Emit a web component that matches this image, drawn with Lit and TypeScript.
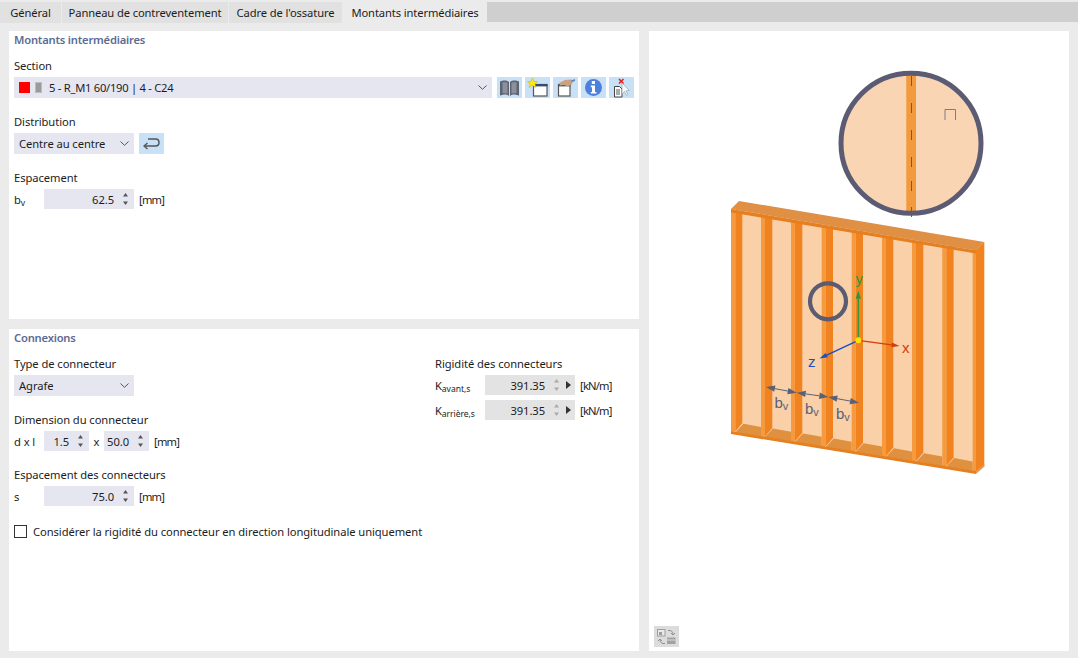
import { LitElement, html, css, svg } from "lit";
import { customElement } from "lit/decorators.js";

const chevron = html`<svg class="chev" width="9" height="5" viewBox="0 0 9 5"><path d="M.5 .5 4.5 4.3 8.5 .5" fill="none" stroke="#555" stroke-width="1"/></svg>`;

const spin = (dis = false) => html`<svg class="spin" width="5" height="12" viewBox="0 0 5 12">
  <path d="M2.5 0 5 3.5H0Z" fill="${dis ? "#aaa" : "#555"}"/><path d="M2.5 12 0 8.5H5Z" fill="${dis ? "#aaa" : "#555"}"/></svg>`;

const yTop = (x: number) => 209 + (x - 731) * 0.167;
const yBot = (x: number) => 431.5 + (x - 731) * 0.163;

function wall() {
  const posts = [731, 761, 791, 821.7, 851.7, 882, 912, 942.3];
  const parts: unknown[] = [];
  parts.push(svg`<polygon points="731,209 976,250 976,471 731,431" fill="#f9d0a8"/>`);
  const starts = [735.5, ...posts.slice(1).map((p) => p + 4)];
  const ends = [761, 791, 821.7, 851.7, 882, 912, 942.3, 972.7];
  starts.forEach((s, i) => {
    const e = ends[i];
    parts.push(svg`<polygon points="${s},${yBot(s)} ${s + 8},${yBot(s) - 8.5} ${e},${yBot(e) - 9.5} ${e},${yBot(e)}" fill="#e0913f"/>`);
  });
  posts.forEach((p) => {
    const light = p === 731 ? 4.3 : 4;
    parts.push(svg`<polygon points="${p},${yTop(p) + 2} ${p + light},${yTop(p) + 2} ${p + light},${yBot(p)} ${p},${yBot(p)}" fill="#f59a3e"/>`);
    parts.push(svg`<polygon points="${p + light},${yTop(p) + 2} ${p + 11.3},${yTop(p) + 2} ${p + 11.3},${yBot(p) - 8.5} ${p + light},${yBot(p)}" fill="#f0831f"/>`);
  });
  parts.push(svg`<polygon points="972.7,249 976,250 976,471 972.7,471" fill="#f59a3e"/>`);
  parts.push(svg`<polygon points="976,250 984.3,242 984.3,466.5 976,473" fill="#f0831f"/>`);
  parts.push(svg`<polygon points="731,209 739,201 984.3,242 976,250.5" fill="#e09045"/>`);
  parts.push(svg`<polygon points="731,209 976,250.5 976,253.5 731,212.5" fill="#e57f20"/>`);
  parts.push(svg`<polygon points="731,431 976,471 976,474 731,434" fill="#e57f20"/>`);
  parts.push(svg`<polygon points="976,471 984.3,464 984.3,466.5 976,474" fill="#e89a55"/>`);
  return parts;
}

const arrow = (x1: number, y1: number, x2: number, y2: number, c: string, w = 1, l = 8, hw = 3) => {
  const a = Math.atan2(y2 - y1, x2 - x1);
  const bx = x2 - Math.cos(a) * l, by = y2 - Math.sin(a) * l;
  const nx = -Math.sin(a) * hw, ny = Math.cos(a) * hw;
  return svg`<line x1="${x1}" y1="${y1}" x2="${bx}" y2="${by}" stroke="${c}" stroke-width="${w}"/>
  <polygon points="${x2},${y2} ${bx + nx},${by + ny} ${bx - nx},${by - ny}" fill="${c}"/>`;
};

const dim = (x1: number, y1: number, x2: number, y2: number) => {
  const c = "#5b6075";
  const mx = (x1 + x2) / 2, my = (y1 + y2) / 2;
  return svg`${arrow(mx, my, x1, y1, c, 1, 9, 3.2)}${arrow(mx, my, x2, y2, c, 1, 9, 3.2)}`;
};

const bv = (x: number, y: number) => svg`<text x="${x}" y="${y}" class="dimt">b<tspan class="dims" dy="2">v</tspan></text>`;

@customElement("app-root")
export class AppRoot extends LitElement {
  static styles = css`
    :host { display: block; width: 1078px; height: 658px; background: #ebebeb; overflow: hidden;
      font-family: "Noto Sans", "Open Sans", sans-serif; font-size: 11.2px; letter-spacing: -0.07px; color: #1c1c1c; }
    .tabs { display: flex; height: 23px; letter-spacing: -0.12px; }
    .tab { height: 21px; margin-top: 2px; background: #e1e1e1; display: flex; align-items: center; justify-content: center; margin-right: 1px; box-sizing: border-box; }
    .tab.active { height: 23px; margin-top: 0; padding-top: 2px; background: #ebebeb; margin-right: 0; }
    .fill { flex: 1; height: 20px; margin-top: 2px; background: #cfcfcf; }
    .body { display: grid; grid-template-columns: 630px 420px; grid-template-rows: 288px 322px; gap: 10px; padding: 8px 9px 0; }
    .panel { background: #fff; padding: 0 5px; min-width: 0; position: relative; }
    .view { grid-row: 1 / 3; grid-column: 2; padding: 0; }
    .title { height: 18px; line-height: 18px; font-weight: 600; color: #5d6b92; letter-spacing: -0.2px; }
    .label { height: 16px; line-height: 16px; margin-bottom: 3px; white-space: nowrap; }
    .group { margin-top: 16px; }
    .first { margin-top: 9px; }
    .row { display: flex; align-items: center; height: 21px; }
    .row.sm { height: 20px; }
    .select { height: 21px; background: #e6e6f0; display: flex; align-items: center; padding: 0 5px; box-sizing: border-box; width: 120px; justify-content: space-between; flex: none; }
    .select.wide { width: 478px; letter-spacing: -0.27px; }
    .left { display: flex; align-items: center; }
    .swatch { width: 11px; height: 11px; background: #f00; }
    .bar { width: 5px; height: 9px; margin: 0 7px 0 5px; background: #9b9b9b; border: 1px solid #bdbdbd; }
    .btns { display: flex; gap: 3px; margin-left: 5px; }
    .btn { width: 25px; height: 21px; background: #c9e1f6; display: flex; align-items: center; justify-content: center; flex: none; }
    .rowlabel { width: 30px; flex: none; white-space: nowrap; }
    .input { height: 20px; background: #e6e6f0; display: flex; align-items: center; justify-content: flex-end; box-sizing: border-box; padding-right: 6px; gap: 9px; flex: none; }
    .input.w90 { width: 90px; }
    .input.w45 { width: 45px; }
    .input.ro { background: #e3e3e3; padding-right: 4px; }
    .unit { margin-left: 5px; white-space: nowrap; letter-spacing: -0.8px; }
    .times { width: 15px; text-align: center; flex: none; }
    sub { font-size: 8.6px; vertical-align: baseline; position: relative; top: 2px; line-height: 0; }
    .cols { display: grid; grid-template-columns: 421px auto; }
    .col2 { margin-top: 9px; }
    .rows2 { display: flex; flex-direction: column; gap: 5px; }
    .rowlabel.k { width: 50px; }
    .tri { margin-left: -2px; }
    .check { display: flex; align-items: center; margin-top: 18px; height: 14px; white-space: nowrap; }
    .box { width: 11px; height: 11px; border: 1px solid #333; background: #fff; margin-right: 6px; flex: none; }
    .scene { position: absolute; left: 0; top: 0; }
    .dimt { font: 15px "Liberation Sans", sans-serif; letter-spacing: 0; fill: #5b6075; }
    .dims { font-size: 11px; }
    .axl { font: 15px "Liberation Sans", sans-serif; letter-spacing: 0; }
    .viewbtn { position: absolute; left: 5px; bottom: 4px; width: 25px; height: 21px; background: #dcdcdc; display: flex; align-items: center; justify-content: center; }
  `;

  private scene() {
    const dashes = [76, 103, 130, 157, 181, 207];
    return html`<svg class="scene" width="420" height="620" viewBox="649 31 420 620">
      <circle cx="911" cy="143.3" r="70" fill="#f9d5b3"/>
      <rect x="906" y="73" width="10" height="140" fill="#f39a3f"/>
      <rect x="906" y="73" width="1" height="140" fill="#f5a860"/>
      ${dashes.map((d) => svg`<line x1="911.5" x2="911.5" y1="${d}" y2="${d + 10}" stroke="#5f5b68" stroke-width="1"/>`)}
      <path d="M945 120V109.5H955.5V120" fill="none" stroke="#7f7a8a" stroke-width="1"/>
      <circle cx="911" cy="143.3" r="70" fill="none" stroke="#5b5b73" stroke-width="5"/>
      ${wall()}
      <circle cx="828" cy="301.3" r="18" fill="none" stroke="#5b5b73" stroke-width="4.2"/>
      ${arrow(858.3, 340.3, 858.3, 290.7, "#1f9a3e", 1.2, 8, 2.6)}
      ${arrow(858.3, 340.3, 899.5, 346, "#d23c0e", 1.2, 8, 2.4)}
      ${arrow(858.3, 340.3, 819.5, 358.5, "#1a4fc4", 1.4, 8, 2.4)}
      <circle cx="858.3" cy="340.3" r="3" fill="#ffe000"/>
      <text x="855.5" y="284" class="axl" fill="#2a9a3a">y</text>
      <text x="902" y="352.5" class="axl" fill="#d23c0e">x</text>
      <text x="808" y="366.5" class="axl" fill="#1a4fc4">z</text>
      ${dim(766, 387, 796.7, 392.7)}${dim(796.7, 392.7, 828.3, 397)}${dim(828.3, 397, 859, 402.7)}
      ${bv(774.5, 408)}${bv(805, 414)}${bv(836, 419)}
    </svg>`;
  }

  render() {
    const tabs = [["Général", 61, false], ["Panneau de contreventement", 166, false], ["Cadre de l'ossature", 113, false], ["Montants intermédiaires", 144, true]] as const;
    return html`
      <div class="tabs">
        ${tabs.map(([t, w, a]) => html`<div class="tab ${a ? "active" : ""}" style="width:${w}px">${t}</div>`)}
        <div class="fill"></div>
      </div>
      <div class="body">
        <section class="panel">
          <div class="title">Montants intermédiaires</div>
          <div class="first">
            <div class="label">Section</div>
            <div class="row">
              <div class="select wide">
                <div class="left"><span class="swatch"></span><span class="bar"></span><span>5 - R_M1 60/190 | 4 - C24</span></div>
                ${chevron}
              </div>
              <div class="btns">
                <div class="btn"><svg width="21" height="18" viewBox="0 0 21 18"><path d="M1 2.5 4 1.5C6 1.2 8.5 1.5 10 3V17C8.5 15.6 6 15.4 4 15.7L1 16.5Z" fill="#5e6470"/><path d="M20 2.5 17 1.5C15 1.2 12.5 1.5 11 3V17C12.5 15.6 15 15.4 17 15.7L20 16.5Z" fill="#5e6470"/><path d="M3.5 3 8.5 3.6V14.4L3.5 14ZM17.5 3 12.5 3.6V14.4L17.5 14Z" fill="#8a909c"/></svg></div>
                <div class="btn"><svg width="21" height="19" viewBox="0 0 21 19"><rect x="6.5" y="6.5" width="13.5" height="11.5" fill="#fff" stroke="#555" stroke-width="1.2"/><rect x="6" y="6" width="14.5" height="2.4" fill="#3a4a6a"/><path d="M5.5 0 7 3.5 10.5 3.5 8 6 9 9.5 5.5 7.5 2 9.5 3 6 .5 3.5 4 3.5Z" fill="#ffe81a" stroke="#b5a400" stroke-width=".4"/></svg></div>
                <div class="btn"><svg width="21" height="19" viewBox="0 0 21 19"><rect x="3.5" y="6.5" width="11.5" height="11.5" fill="#fff" stroke="#555" stroke-width="1.2"/><rect x="3" y="6" width="12.5" height="2.4" fill="#555"/><path d="M4 5 10 2 16 1.5 18 3 17 6 13 8.5 9 7 5 7.5Z" fill="#c9a183"/><path d="M16 2.5 20 1 20 3 17 4Z" fill="#5a86c8"/></svg></div>
                <div class="btn"><svg width="19" height="19" viewBox="0 0 19 19"><circle cx="9.5" cy="9.5" r="8.5" fill="#4d80dc"/><rect x="7.8" y="3" width="3.2" height="3" fill="#fff"/><path d="M6.8 7.6H11V14H12.4V15.6H6.8V14H8V9.2H6.8Z" fill="#fff"/></svg></div>
                <div class="btn"><svg width="21" height="20" viewBox="0 0 21 20"><path d="M8 1 12.5 5.5M12.5 1 8 5.5" stroke="#e02020" stroke-width="1.6"/><path d="M3.5 8.5H8.5L11 11V19H3.5Z" fill="#fff" stroke="#444"/><path d="M5 12H9M5 14H9M5 16H9" stroke="#444" stroke-width=".9"/><path d="M11 5 11 16 13.5 13.5 15.5 17.5 17 16.5 15 12.8 18.5 12.5Z" fill="#f4f6f8" stroke="#9aa" stroke-width=".7"/></svg></div>
              </div>
            </div>
          </div>
          <div class="group">
            <div class="label">Distribution</div>
            <div class="row">
              <div class="select"><span>Centre au centre</span>${chevron}</div>
              <div class="btns"><div class="btn"><svg width="17" height="12" viewBox="0 0 17 12"><path d="M5 1H12.5C14.5 1 16 2.5 16 4.5S14.5 8 12.5 8H2" fill="none" stroke="#555" stroke-width="1.5"/><path d="M4.5 5 1 8 4.5 11" fill="none" stroke="#555" stroke-width="1.4"/></svg></div></div>
            </div>
          </div>
          <div class="group">
            <div class="label">Espacement</div>
            <div class="row sm">
              <span class="rowlabel">b<sub>v</sub></span>
              <div class="input w90"><span>62.5</span>${spin()}</div>
              <span class="unit">[mm]</span>
            </div>
          </div>
        </section>

        <section class="panel view">
          ${this.scene()}
          <div class="viewbtn"><svg width="21" height="18" viewBox="0 0 21 18" opacity=".75"><rect x="1.5" y="1.5" width="7.5" height="6.5" fill="#eee" stroke="#8a8a8a"/><rect x="3" y="4" width="3" height="3" fill="#888"/><path d="M12 2.5C15 2 17 3.5 17 6.5M15 5 17 7 19 5M9 15.5C6 16 4 14.5 4 11.5M2 13 4 11 6 13" fill="none" stroke="#777"/><rect x="11" y="9.5" width="8.5" height="6.5" fill="#8f8f8f"/><path d="M11 12H19.5" stroke="#ddd"/></svg></div>
        </section>

        <section class="panel">
          <div class="title">Connexions</div>
          <div class="cols">
            <div>
              <div class="first">
                <div class="label">Type de connecteur</div>
                <div class="select"><span>Agrafe</span>${chevron}</div>
              </div>
              <div class="group">
                <div class="label">Dimension du connecteur</div>
                <div class="row sm">
                  <span class="rowlabel">d x l</span>
                  <div class="input w45"><span>1.5</span>${spin()}</div>
                  <span class="times">x</span>
                  <div class="input w45"><span>50.0</span>${spin()}</div>
                  <span class="unit">[mm]</span>
                </div>
              </div>
              <div class="group">
                <div class="label">Espacement des connecteurs</div>
                <div class="row sm">
                  <span class="rowlabel">s</span>
                  <div class="input w90"><span>75.0</span>${spin()}</div>
                  <span class="unit">[mm]</span>
                </div>
              </div>
              <label class="check"><span class="box"></span>Considérer la rigidité du connecteur en direction longitudinale uniquement</label>
            </div>
            <div class="col2">
              <div class="label">Rigidité des connecteurs</div>
              <div class="rows2">
                <div class="row sm">
                  <span class="rowlabel k">K<sub>avant,s</sub></span>
                  <div class="input w90 ro"><span>391.35</span>${spin(true)}<svg class="tri" width="5" height="8" viewBox="0 0 5 8"><path d="M0 0 5 4 0 8Z" fill="#333"/></svg></div>
                  <span class="unit">[kN/m]</span>
                </div>
                <div class="row sm">
                  <span class="rowlabel k">K<sub>arrière,s</sub></span>
                  <div class="input w90 ro"><span>391.35</span>${spin(true)}<svg class="tri" width="5" height="8" viewBox="0 0 5 8"><path d="M0 0 5 4 0 8Z" fill="#333"/></svg></div>
                  <span class="unit">[kN/m]</span>
                </div>
              </div>
            </div>
          </div>
        </section>
      </div>
    `;
  }
}
